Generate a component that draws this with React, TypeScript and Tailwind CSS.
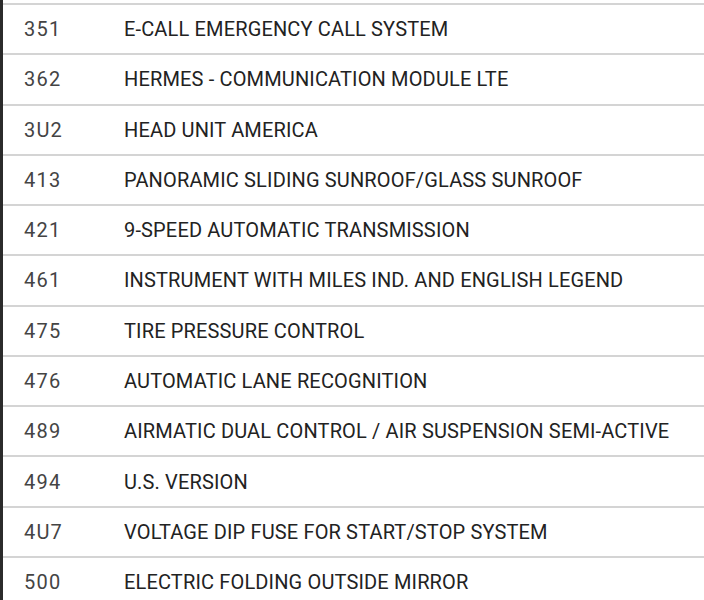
import React from "react";

const rows: [string, string][] = [
  ["351", "E-CALL EMERGENCY CALL SYSTEM"],
  ["362", "HERMES - COMMUNICATION MODULE LTE"],
  ["3U2", "HEAD UNIT AMERICA"],
  ["413", "PANORAMIC SLIDING SUNROOF/GLASS SUNROOF"],
  ["421", "9-SPEED AUTOMATIC TRANSMISSION"],
  ["461", "INSTRUMENT WITH MILES IND. AND ENGLISH LEGEND"],
  ["475", "TIRE PRESSURE CONTROL"],
  ["476", "AUTOMATIC LANE RECOGNITION"],
  ["489", "AIRMATIC DUAL CONTROL / AIR SUSPENSION SEMI-ACTIVE"],
  ["494", "U.S. VERSION"],
  ["4U7", "VOLTAGE DIP FUSE FOR START/STOP SYSTEM"],
  ["500", "ELECTRIC FOLDING OUTSIDE MIRROR"],
];

export default function App() {
  return (
    <div
      className="w-[704px] h-[600px] overflow-hidden bg-white border-l-[3px] border-[#2b2b2b]"
      style={{ fontFamily: "Roboto, 'Liberation Sans', sans-serif" }}
    >
      <div className="h-[3px]" />
      {rows.map(([code, desc]) => (
        <div
          key={code}
          className="h-[50.27px] border-t-2 border-[#d4d4d4] flex items-center text-[20px]"
        >
          <div className="w-[121px] pl-[21px] text-[#444444] tracking-[1.2px]">{code}</div>
          <div className="text-[#222222] whitespace-nowrap tracking-[0.15px]">{desc}</div>
        </div>
      ))}
    </div>
  );
}
